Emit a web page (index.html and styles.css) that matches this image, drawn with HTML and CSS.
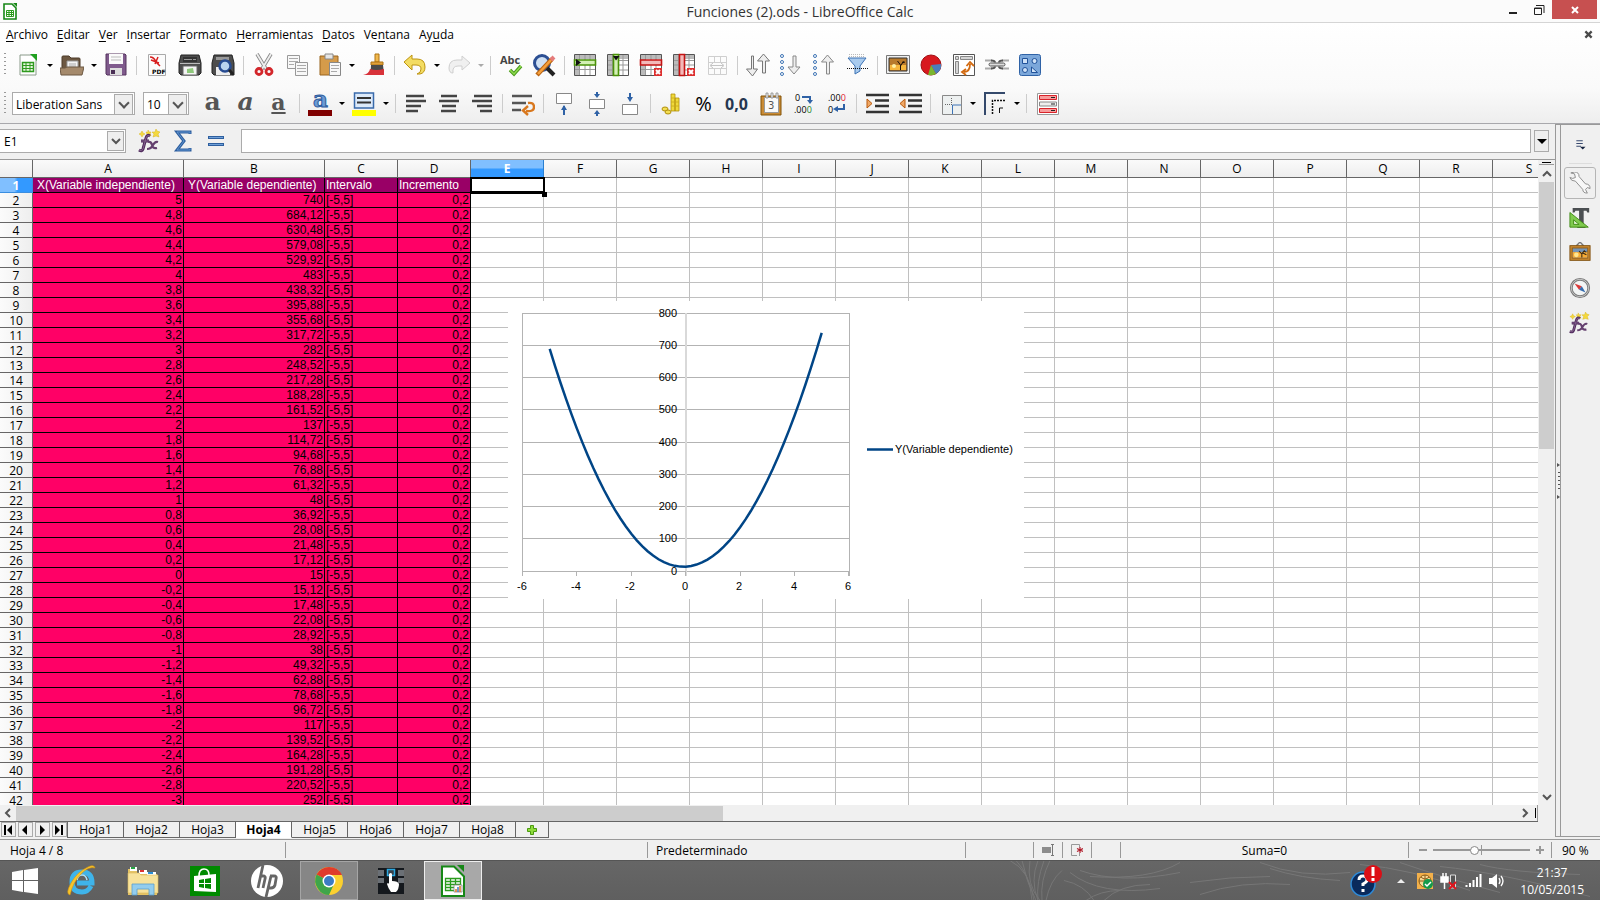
FILE: index.html
```
<!DOCTYPE html>
<html lang="es">
<head>
  <meta charset="UTF-8" />
  <meta name="viewport" content="width=device-width, initial-scale=1.0" />
  <title>Funciones (2).ods - LibreOffice Calc</title>
  <link rel="stylesheet" href="styles.css">
</head>
<body>
  <!-- Shared icons -->
  <svg class="defs" aria-hidden="true">
    <symbol id="fx" viewBox="0 0 24 24">
      <path d="M3 4l1-2 1 2 2 1-2 1-1 2-1-2-2-1zM10 1l1 2h2l-1 2 1 2-2-1-2 1v-2L8 3h2zM18 0l1 2 3 1-2 2 1 3-3-1-3 1 1-3-2-2h3z" fill="#f4d93e" stroke="#d9b51e" stroke-width=".5"/>
      <path d="M12 7q-3-2-4 2L5 20q-1 3-4 1M3 12h8" fill="none" stroke="#4f2a5c" stroke-width="3"/>
      <path d="M12 7q-3-2-4 2L5 20q-1 3-4 1M3 12h8" fill="none" stroke="#85628f" stroke-width="1"/>
      <path d="M10 13q3-1 4 3t5 3M20 13q-3-1-5 3t-6 4" fill="none" stroke="#65406f" stroke-width="2.2"/>
    </symbol>
    <symbol id="picture" viewBox="0 0 24 24">
      <rect x="1" y="4" width="22" height="16" fill="#c98a32" stroke="#7e4d0b"/>
      <rect x="3.5" y="6.500" width="17" height="11" fill="#7595b8" stroke="#8b5713"/>
      <path d="M4 11h16v6H4z" fill="#f8ac35"/><circle cx="8" cy="14" r="2.500" fill="#ffe68f"/>
      <path d="M14 17v-4l-3-3M14 13l3-4M16 10l3 1M15 12l4 2" stroke="#3b2a14" fill="none" stroke-width="1.200"/>
    </symbol>
  </svg>

  <header class="titlebar">
    <svg class="app-icon" viewBox="0 0 14 17"><path d="M1 1h8l4 4v11H1z" fill="#fff" stroke="#178717" stroke-width="1.600"/><path d="M10 0h4v4z" fill="#178717"/><path d="M3.500 7.500h7v6h-7zM3 9.500h8M3 11.500h8M6 7v7M8.500 7v7" fill="none" stroke="#2a9c1c"/></svg>
    <h1>Funciones (2).ods - LibreOffice Calc</h1>
    <div class="window-buttons">
      <button aria-label="Minimizar"><svg viewBox="0 0 12 12"><path d="M2 9h8" stroke="#222" stroke-width="2"/></svg></button>
      <button aria-label="Restaurar"><svg viewBox="0 0 12 12"><path d="M1.500 4h7v6.500h-7zM3 1.500h8V9M1 4.500h8" fill="none" stroke="#222"/></svg></button>
      <button class="close" aria-label="Cerrar"><svg viewBox="0 0 12 12"><path d="M3 3l6 6M9 3l-6 6" stroke="#fff" stroke-width="2"/></svg></button>
    </div>
  </header>

  <div class="bars">
    <nav class="menu">
      <button><u>A</u>rchivo</button>
      <button><u>E</u>ditar</button>
      <button><u>V</u>er</button>
      <button><u>I</u>nsertar</button>
      <button><u>F</u>ormato</button>
      <button><u>H</u>erramientas</button>
      <button><u>D</u>atos</button>
      <button>Ve<u>n</u>tana</button>
      <button>Ay<u>u</u>da</button>
      <button class="close-doc" aria-label="Cerrar documento"><svg viewBox="0 0 10 10"><path d="M1.500 1.500l7 7M8.500 1.500l-7 7" stroke="#4a4a4a" stroke-width="2.500"/></svg></button>
    </nav>

    <div class="toolbar" id="standard-bar">
      <span class="grip"></span>
      <button class="tool" aria-label="Nuevo"><svg viewBox="0 0 24 24"><path d="M4 2h12l4 4v16H4z" fill="#fff" stroke="#8a9a8a"/><path d="M14 1h7v7z" fill="#20a020"/><path d="M6.500 9.500h11v9h-11z" fill="#e6f6dc" stroke="#2f9a1f" stroke-width="1.500"/><path d="M6 12.500h12M6 15.500h12M10 9v10M14 9v10" stroke="#2f9a1f"/></svg></button>
      <button class="drop" aria-label="Más"></button>
      <button class="tool" aria-label="Abrir"><svg viewBox="0 0 24 24"><path d="M2 19V4q0-1 1-1h6l2 2h8q1 0 1 1v13z" fill="#6d5842" stroke="#4d3b29"/><path d="M7 8h11v9H7z" fill="#f4f4f4" stroke="#999"/><path d="M9 11h7M9 13h7" stroke="#aaa"/><path d="M0 15h5l2-1h17l-2 8H1z" fill="#a58a6c" stroke="#6d5842"/></svg></button>
      <button class="drop" aria-label="Más"></button>
      <button class="tool" aria-label="Guardar"><svg viewBox="0 0 24 24"><path d="M2 1h19l1 1v20H3l-1-1z" fill="#7f5a8c" stroke="#56345f"/><path d="M5 1h14v10H5z" fill="#fafafa"/><path d="M7 4h10M7 7h10" stroke="#bbb"/><path d="M6 15h12v7H6z" fill="#ddd"/><path d="M7 17h4v4H7z" fill="#4a2f55"/></svg></button>
      <span class="sep"></span>
      <button class="tool" aria-label="Exportar a PDF"><svg viewBox="0 0 24 24"><path d="M3.500 1.500h17v21h-17z" fill="#fbfbfb" stroke="#aaa"/><path d="M5 4q4 0 6 5l4 4M13 4l-3 7M6 7l8 3" stroke="#d81e1e" stroke-width="1.500" fill="none"/><text x="7" y="21" class="ico-pdf">PDF</text></svg></button>
      <button class="tool" aria-label="Imprimir"><svg viewBox="0 0 24 24"><path d="M3 2h18l2 8v10l-2 2H3l-2-2V10z" fill="#4d4d4d" stroke="#222"/><path d="M5 4h14v5H5z" fill="#333"/><path d="M6 6.500h8M15 6.500h3" stroke="#999"/><path d="M2 10.500h20" stroke="#bbb"/><path d="M5 13h14v9H5z" fill="#f4f4f4" stroke="#666"/><path d="M9 16l6-1 1 5H9z" fill="#8fc97c"/></svg></button>
      <button class="tool" aria-label="Vista previa"><svg viewBox="0 0 24 24"><path d="M3 2h18l2 8v10l-2 2H3l-2-2V10z" fill="#4d4d4d" stroke="#222"/><path d="M5 4h13v3H5z" fill="#999"/><path d="M5 14h14v8H5z" fill="#eee"/><circle cx="14" cy="13" r="5.500" fill="#b9d3ee" stroke="#274b91" stroke-width="2.500"/><path d="M18 17l5 5" stroke="#222" stroke-width="3"/></svg></button>
      <span class="sep"></span>
      <button class="tool" aria-label="Cortar"><svg viewBox="0 0 24 24"><path d="M5 1l9 15M19 1l-9 15" stroke="#888" stroke-width="3.500"/><path d="M5 1l9 15M19 1l-9 15" stroke="#eee" stroke-width="1.800"/><circle cx="7" cy="18.500" r="3" fill="none" stroke="#d3262b" stroke-width="2.800"/><circle cx="17" cy="18.500" r="3" fill="none" stroke="#d3262b" stroke-width="2.800"/></svg></button>
      <button class="tool" aria-label="Copiar"><svg viewBox="0 0 24 24"><path d="M2.500 2.500h12v13h-12z" fill="#f8f8f8" stroke="#999"/><path d="M4 5.500h9M4 8.500h9M4 11.500h5" stroke="#aaa"/><path d="M10.500 9.500h12v13h-12z" fill="#f8f8f8" stroke="#999"/><path d="M12 12.500h9M12 15.500h9M12 18.500h9" stroke="#aaa"/></svg></button>
      <button class="tool" aria-label="Pegar"><svg viewBox="0 0 24 24"><path d="M2 3h18v19H2z" fill="#d59b4a" stroke="#99651e"/><path d="M7 1h8v5H7z" fill="#e6e6e6" stroke="#888"/><path d="M11.500 9.500h11v13h-11z" fill="#f8f8f8" stroke="#888"/><path d="M13 12.500h8M13 15.500h8M13 18.500h6" stroke="#aaa"/></svg></button>
      <button class="drop" aria-label="Más"></button>
      <button class="tool" aria-label="Clonar formato"><svg viewBox="0 0 24 24"><path d="M13 1h4v8h-4z" fill="#f0b84d" stroke="#ad7312"/><path d="M9 9h12v3H9z" fill="#e0a13b" stroke="#ad7312"/><path d="M9 12h12l1 9H7q2-3 2-9z" fill="#4a4a4a"/><path d="M8 16q6 2 14 0v6H1q6-1 7-6z" fill="#d8323a"/></svg></button>
      <span class="sep"></span>
      <button class="tool" aria-label="Deshacer"><svg viewBox="0 0 24 24"><path d="M1 9l8-7v4h5q8 0 8 8 0 6-5 7h-3q4-1 4-5t-5-4H9v5z" fill="#f3dc62" stroke="#bd9410"/></svg></button>
      <button class="drop" aria-label="Más"></button>
      <button class="tool" aria-label="Rehacer"><svg viewBox="0 0 24 24"><path d="M23 10l-8-7v4h-5q-8 0-8 8 0 5 4 5-1-7 5-7h4v4z" fill="#f0f0f0" stroke="#cfcfcf"/></svg></button>
      <button class="drop off" aria-label="Más"></button>
      <span class="sep"></span>
      <button class="tool" aria-label="Ortografía"><svg viewBox="0 0 24 24"><text x="1" y="11" class="ico-abc">Abc</text><path d="M11 17l4 4 7-8" fill="none" stroke="#4c9a1e" stroke-width="3.500"/><path d="M11 17l4 4 7-8" fill="none" stroke="#8fdc4e" stroke-width="1.500"/></svg></button>
      <button class="tool" aria-label="Buscar y reemplazar"><svg viewBox="0 0 24 24"><circle cx="10" cy="10" r="7.500" fill="#cfe0f3" stroke="#2c4f93" stroke-width="3"/><path d="M15 15l7 7" stroke="#222" stroke-width="4"/><path d="M5 22L20 6" stroke="#b96412" stroke-width="4.500"/><path d="M6 21L19 7" stroke="#f6a03c" stroke-width="2.500"/><path d="M19 7l3-3" stroke="#e57b7b" stroke-width="4"/></svg></button>
      <span class="sep"></span>
      <button class="tool" aria-label="Insertar fila"><svg viewBox="0 0 24 24"><path d="M1.500 1.500h21v21h-21z" fill="#fff" stroke="#555"/><path d="M2 2h20v4H2zM2 2h4v20H2z" fill="#bbb"/><path d="M6.500 2v20M12 2v20M17 2v20M2 16.500h20" stroke="#999"/><path d="M1.500 7h21v5h-21z" fill="#d3f0b4" stroke="#4a9208" stroke-width="1.600"/><path d="M3 6l5 3.500L3 13z" fill="#111"/></svg></button>
      <button class="tool" aria-label="Insertar columna"><svg viewBox="0 0 24 24"><path d="M1.500 1.500h21v21h-21z" fill="#fff" stroke="#555"/><path d="M2 2h20v4H2zM2 2h4v20H2z" fill="#bbb"/><path d="M2 7.500h20M2 12h20M2 17h20M6.500 2v20M17 2v20" stroke="#999"/><path d="M7.500 1.500h5v21h-5z" fill="#d3f0b4" stroke="#4a9208" stroke-width="1.600"/><path d="M7 3h6.500L10 7.500z" fill="#111"/></svg></button>
      <button class="tool" aria-label="Eliminar fila"><svg viewBox="0 0 24 24"><path d="M1.500 1.500h21v21h-21z" fill="#fff" stroke="#555"/><path d="M2 2h20v4H2zM2 2h4v20H2z" fill="#bbb"/><path d="M6.500 2v20M12 2v20M17 2v20M2 16.500h20" stroke="#999"/><path d="M1.500 7h21v5h-21z" fill="#f3b9b9" stroke="#c41414" stroke-width="1.600"/><path d="M15 15h8v8h-8z" fill="#dc2f2f"/><path d="M17 17l4 4M21 17l-4 4" stroke="#fff" stroke-width="2"/></svg></button>
      <button class="tool" aria-label="Eliminar columna"><svg viewBox="0 0 24 24"><path d="M1.500 1.500h21v21h-21z" fill="#fff" stroke="#555"/><path d="M2 2h20v4H2zM2 2h4v20H2z" fill="#bbb"/><path d="M2 7.500h20M2 12h20M2 17h20M6.500 2v20M17 2v20" stroke="#999"/><path d="M7.500 1.500h5v21h-5z" fill="#f3b9b9" stroke="#c41414" stroke-width="1.600"/><path d="M15 15h8v8h-8z" fill="#dc2f2f"/><path d="M17 17l4 4M21 17l-4 4" stroke="#fff" stroke-width="2"/></svg></button>
      <button class="tool" aria-label="Combinar celdas"><svg viewBox="0 0 24 24"><path d="M3.500 3.500h18v18h-18zM3 9.500h18M3 15.500h18M9.500 3v6M15.500 3v6M9.500 16v6M15.500 16v6" fill="none" stroke="#cfcfcf"/><path d="M6 12.500h12M8 10l-3 2.500L8 15M16 10l3 2.500-3 2.500" fill="none" stroke="#c4c4c4"/></svg></button>
      <span class="sep"></span>
      <button class="tool" aria-label="Ordenar"><svg viewBox="0 0 24 24"><path d="M5.500 3h2v13h4l-5 7-6-7h5z" fill="#eee" stroke="#777"/><path d="M17.500 1l6 7h-4v12h-3V8h-5z" fill="#eee" stroke="#777"/></svg></button>
      <button class="tool" aria-label="Orden ascendente"><svg viewBox="0 0 24 24"><g fill="#fff" stroke="#3e74b5"><circle cx="3" cy="3" r="1.500"/><circle cx="3" cy="9" r="1.500"/><circle cx="3" cy="15" r="1.500"/><circle cx="3" cy="21" r="1.500"/></g><path d="M14 3h3v11h4l-6 7-6-7h5z" fill="#eee" stroke="#888"/></svg></button>
      <button class="tool" aria-label="Orden descendente"><svg viewBox="0 0 24 24"><g fill="#fff" stroke="#3e74b5"><circle cx="3" cy="3" r="1.500"/><circle cx="3" cy="9" r="1.500"/><circle cx="3" cy="15" r="1.500"/><circle cx="3" cy="21" r="1.500"/></g><path d="M15.500 2l6 7h-4v12h-3V9h-5z" fill="#eee" stroke="#888"/></svg></button>
      <button class="tool" aria-label="Filtro automático"><svg viewBox="0 0 24 24"><path d="M4 1.500h16M4 3.500h16" stroke="#bbb" stroke-dasharray="1 1"/><path d="M3 5h18l-6 8v5l-5 3v-8z" fill="#a9cbee" stroke="#3c72b4"/><path d="M2 15.500h21" stroke="#111" stroke-dasharray="1 1"/></svg></button>
      <span class="sep"></span>
      <button class="tool" aria-label="Imagen"><svg viewBox="0 0 24 24"><path d="M.5 2.500h23v18H.5z" fill="#eee" stroke="#777"/><path d="M3 5h18v13H3z" fill="#b97a2c" stroke="#333"/><path d="M4 12h16v5H4z" fill="#f7b63d"/><circle cx="8" cy="13" r="2" fill="#fff0a6"/><path d="M14.500 17v-5l-3-4M14.500 13l3-5M16 10l3-1" fill="none" stroke="#20140a"/></svg></button>
      <button class="tool" aria-label="Gráfico"><svg viewBox="0 0 24 24"><circle cx="12" cy="12" r="10" fill="#d8191f" stroke="#a10f13"/><path d="M12 12l10-1q1 6-5 10z" fill="#4d7dbb"/><path d="M12 12l5 9q-4 2-8 1z" fill="#79b62f"/></svg></button>
      <button class="tool" aria-label="Tabla dinámica"><svg viewBox="0 0 24 24"><path d="M1.500 1.500h21v21h-21z" fill="#fff" stroke="#555"/><path d="M3.500 3.500h3v3h-3zM8.500 3.500h12v3h-12zM3.500 8.500h3v12h-3z" fill="#d5d5d5" stroke="#888"/><path d="M12 19q6 0 6-8M14.500 13L18 9l4 4M14 16l-4 3 4 3" fill="none" stroke="#d26a10" stroke-width="1.800"/></svg></button>
      <button class="tool" aria-label="Hiperenlace"><svg viewBox="0 0 24 24"><path d="M0 7.500h7M0 15.500h7M17 7.500h7M17 15.500h7" stroke="#aaa" stroke-width="2"/><path d="M6 7.500q4 0 4 2M6 15.500q4 0 4-2M18 7.500q-4 0-4 2M18 15.500q-4 0-4-2" fill="none" stroke="#555" stroke-width="2"/><rect x="4" y="10" width="16" height="3" rx="1.500" fill="#ddd" stroke="#555"/></svg></button>
      <button class="tool" aria-label="Funciones de dibujo"><svg viewBox="0 0 24 24"><rect x="1.500" y="1.500" width="21" height="21" rx="2" fill="#7ba7da" stroke="#2f62a6"/><path d="M4.500 5.500h5v5h-5zM13.500 14v5.500h6z" fill="#cfe2f7" stroke="#20529a"/><circle cx="16.500" cy="8" r="2.500" fill="#cfe2f7" stroke="#20529a"/><circle cx="7" cy="17" r="2.500" fill="#cfe2f7" stroke="#20529a"/></svg></button>
    </div>

    <div class="toolbar" id="format-bar">
      <span class="grip"></span>
      <label class="combo font-name"><select aria-label="Nombre de la fuente"><option>Liberation Sans</option></select></label>
      <label class="combo font-size"><select aria-label="Tamaño de la fuente"><option>10</option></select></label>
      <button class="tool letter" aria-label="Negrita"><b>a</b></button>
      <button class="tool letter" aria-label="Cursiva"><i>a</i></button>
      <button class="tool letter" aria-label="Subrayado"><u>a</u></button>
      <span class="sep"></span>
      <button class="tool" aria-label="Color de fuente"><svg viewBox="0 0 24 24"><text x="5" y="15" class="ico-a">a</text><path d="M0 18h24v6H0z" fill="#800000"/></svg></button>
      <button class="drop" aria-label="Más"></button>
      <button class="tool" aria-label="Color de fondo"><svg viewBox="0 0 24 24"><path d="M2.500 1h19v15h-19z" fill="#dceafa" stroke="#386aab" stroke-width="1.500"/><path d="M5 6h14M5 10.500h14" stroke="#333" stroke-width="2"/><path d="M0 18h24v6H0z" fill="#ff0"/></svg></button>
      <button class="drop" aria-label="Más"></button>
      <span class="sep"></span>
      <button class="tool" aria-label="Izquierda"><svg viewBox="0 0 24 24"><path d="M2 4h18M2 9h20M2 14h15M2 19h12" stroke="#444" stroke-width="2.500"/></svg></button>
      <button class="tool" aria-label="Centrar"><svg viewBox="0 0 24 24"><path d="M4 4h16M2 9h20M5 14h14M4 19h15" stroke="#444" stroke-width="2.500"/></svg></button>
      <button class="tool" aria-label="Derecha"><svg viewBox="0 0 24 24"><path d="M4 4h18M2 9h20M7 14h15M10 19h12" stroke="#444" stroke-width="2.500"/></svg></button>
      <span class="sep"></span>
      <button class="tool" aria-label="Ajustar texto"><svg viewBox="0 0 24 24"><path d="M1 4h20M1 11h14M1 18h9" stroke="#555" stroke-width="2.500"/><path d="M17 11q6-1 6 4t-8 4M17 14l-5 4.500 5 4.500" fill="none" stroke="#d8771d" stroke-width="2.400"/></svg></button>
      <span class="sep"></span>
      <button class="tool" aria-label="Alinear arriba"><svg viewBox="0 0 24 24"><path d="M4.500 1.500h15v10h-15z" fill="#fff" stroke="#888"/><path d="M12 14v9" stroke="#2f62a6" stroke-width="2"/><path d="M9 18l3-5 3 5z" fill="#2f62a6"/></svg></button>
      <button class="tool" aria-label="Centrar verticalmente"><svg viewBox="0 0 24 24"><path d="M4.500 7.500h15v9h-15z" fill="#fff" stroke="#888"/><path d="M12 0v3M12 21v3" stroke="#2f62a6" stroke-width="2"/><path d="M9 2l3 4 3-4zM9 22l3-4 3 4z" fill="#2f62a6"/></svg></button>
      <button class="tool" aria-label="Alinear abajo"><svg viewBox="0 0 24 24"><path d="M4.500 12.500h15v10h-15z" fill="#fff" stroke="#888"/><path d="M12 1v6" stroke="#2f62a6" stroke-width="2"/><path d="M9 5l3 5 3-5z" fill="#2f62a6"/></svg></button>
      <span class="sep"></span>
      <button class="tool" aria-label="Moneda"><svg viewBox="0 0 24 24"><path d="M12 2h4v17h-4zM16 6h4v13h-4z" fill="#efd93a" stroke="#b18f0b" stroke-width=".8"/><path d="M12 6h4M12 10h4M12 14h4M16 10h4M16 14h4" stroke="#c9a820" stroke-width=".8"/><ellipse cx="6" cy="17" rx="3" ry="2" fill="#f3de54" stroke="#b18f0b"/><ellipse cx="9" cy="20" rx="3" ry="2" fill="#f3de54" stroke="#b18f0b"/></svg></button>
      <button class="tool percent" aria-label="Porcentaje">%</button>
      <button class="tool number" aria-label="Número">0,0</button>
      <button class="tool" aria-label="Fecha"><svg viewBox="0 0 24 24"><path d="M3 4h20v19H3z" fill="#c98b35" stroke="#835207"/><path d="M6.500 5.500h14v15h-14z" fill="#fafafa" stroke="#999"/><path d="M8 1h2v5H8zM13 1h2v5h-2zM18 1h2v5h-2z" fill="#eee" stroke="#888" stroke-width=".8"/><text x="10" y="17" class="ico-day">3</text></svg></button>
      <button class="tool" aria-label="Añadir decimal"><svg viewBox="0 0 24 24"><text x="4" y="9" class="ico-dec">0</text><text x="3" y="21" class="ico-dec">.00<tspan fill="#19832b">0</tspan></text><path d="M11 5h8v4" fill="none" stroke="#2f62a6" stroke-width="2"/><path d="M16 8h6l-3 4z" fill="#2f62a6"/></svg></button>
      <button class="tool" aria-label="Eliminar decimal"><svg viewBox="0 0 24 24"><text x="4" y="9" class="ico-dec">.00<tspan fill="#e01b2f">0</tspan></text><text x="4" y="21" class="ico-dec">0</text><path d="M20 12v5h-7" fill="none" stroke="#2f62a6" stroke-width="2"/><path d="M14 14v6l-5-3z" fill="#2f62a6"/></svg></button>
      <span class="sep"></span>
      <button class="tool" aria-label="Aumentar sangría"><svg viewBox="0 0 24 24"><path d="M1 3h23M10 8.500h14M10 14h14M1 20h23" stroke="#333" stroke-width="2.500"/><path d="M2 7l5 4.500L2 16z" fill="#f0a866" stroke="#b8590c"/></svg></button>
      <button class="tool" aria-label="Reducir sangría"><svg viewBox="0 0 24 24"><path d="M1 3h23M10 8.500h14M10 14h14M1 20h23" stroke="#333" stroke-width="2.500"/><path d="M7 7l-5 4.500L7 16z" fill="#f0a866" stroke="#b8590c"/></svg></button>
      <span class="sep"></span>
      <button class="tool" aria-label="Bordes"><svg viewBox="0 0 24 24"><path d="M3.500 3.500h19v19h-19z" fill="#edf0f0" stroke="#888"/><path d="M12.500 6v7M6 12.500h6" stroke="#666" stroke-dasharray="1 1"/><path d="M13.500 22v-9H22" fill="none" stroke="#3c72b4"/></svg></button>
      <button class="drop" aria-label="Más"></button>
      <button class="tool" aria-label="Estilo de borde"><svg viewBox="0 0 24 24"><path d="M2 23V1h20" fill="none" stroke="#34496b" stroke-width="2"/><path d="M9.500 22V8.500H22" fill="none" stroke="#111" stroke-width="1.500" stroke-dasharray="2 1"/><path d="M16.500 21v-5H20" fill="none" stroke="#111"/></svg></button>
      <button class="drop" aria-label="Más"></button>
      <span class="sep"></span>
      <button class="tool" aria-label="Formato condicional"><svg viewBox="0 0 24 24"><path d="M2.500 1.500h21v21h-21z" fill="#fff" stroke="#999"/><path d="M4.500 3.500h17v4h-17zM4.500 16.500h17v4h-17z" fill="#f79c9c" stroke="#d8232a"/><path d="M4.500 10h17v4h-17z" fill="#eee" stroke="#888"/><path d="M16 5.500h4M16 12h4M16 18.500h4" stroke="#222"/></svg></button>
    </div>
  </div>

  <main class="workspace">
    <section class="document">
      <div class="formula-bar">
        <div class="name-box">
          <input type="text" value="E1" aria-label="Cuadro de nombre">
          <button aria-label="Abrir lista"><svg viewBox="0 0 10 10"><path d="M1 3l4 4 4-4" fill="none" stroke="#555" stroke-width="2"/></svg></button>
        </div>
        <button class="tool" aria-label="Asistente de funciones"><svg viewBox="0 0 24 24"><use href="#fx"/></svg></button>
        <button class="tool" aria-label="Suma"><svg viewBox="0 0 24 24"><path d="M19 5V3H6l7 9-7 9h13v-2" fill="none" stroke="#2e5f9f" stroke-width="3"/><path d="M19 4.500V3H6l7 9-7 9h13v-1.500" fill="none" stroke="#5f93cf" stroke-width="1"/></svg></button>
        <button class="tool" aria-label="Función"><svg viewBox="0 0 24 24"><path d="M4 8.500h16M4 15.500h16" stroke="#2e5f9f" stroke-width="3"/><path d="M5 8.500h14M5 15.500h14" stroke="#6fa0d8"/></svg></button>
        <input class="formula" type="text" aria-label="Línea de entrada">
        <button class="expand" aria-label="Expandir"><svg viewBox="0 0 10 10"><path d="M0 3h10L5 8z" fill="#000"/></svg></button>
      </div>

      <div class="sheet-row">
        <div class="sheet">
          <table class="grid">
            <colgroup id="cols"></colgroup>
            <thead><tr id="letters"></tr></thead>
            <tbody id="cells"></tbody>
          </table>
          <svg class="chart" viewBox="0 0 516 298" role="img" aria-label="Y(Variable dependiente)">
            <g id="chart-grid"></g>
            <polyline id="curve"></polyline>
            <path class="series" d="M359 148.500h26"/>
            <text x="387" y="152">Y(Variable dependiente)</text>
          </svg>
        </div>
        <div class="vscroll">
          <span class="split"></span>
          <button aria-label="Subir"><svg viewBox="0 0 10 10"><path d="M1 7l4-4 4 4" fill="none" stroke="#555" stroke-width="2"/></svg></button>
          <span class="thumb"></span>
          <button aria-label="Bajar"><svg viewBox="0 0 10 10"><path d="M1 3l4 4 4-4" fill="none" stroke="#555" stroke-width="2"/></svg></button>
        </div>
      </div>

      <div class="hscroll">
        <button aria-label="Izquierda"><svg viewBox="0 0 10 10"><path d="M7 1L3 5l4 4" fill="none" stroke="#555" stroke-width="2"/></svg></button>
        <span class="thumb"></span>
        <button aria-label="Derecha"><svg viewBox="0 0 10 10"><path d="M3 1l4 4-4 4" fill="none" stroke="#555" stroke-width="2"/></svg></button>
        <span class="split"></span>
      </div>

      <div class="tabs">
        <button class="step" aria-label="Primera hoja"><svg viewBox="0 0 12 12"><path d="M2 1h2v10H2zM10 1v10L5 6z"/></svg></button>
        <button class="step" aria-label="Hoja anterior"><svg viewBox="0 0 12 12"><path d="M8 1v10L3 6z"/></svg></button>
        <button class="step" aria-label="Hoja siguiente"><svg viewBox="0 0 12 12"><path d="M4 1v10l5-5z"/></svg></button>
        <button class="step" aria-label="Última hoja"><svg viewBox="0 0 12 12"><path d="M2 1v10l5-5zM8 1h2v10H8z"/></svg></button>
        <div class="tab-list">
          <button class="tab">Hoja1</button>
          <button class="tab">Hoja2</button>
          <button class="tab">Hoja3</button>
          <button class="tab active">Hoja4</button>
          <button class="tab">Hoja5</button>
          <button class="tab">Hoja6</button>
          <button class="tab">Hoja7</button>
          <button class="tab">Hoja8</button>
          <button class="tab add" aria-label="Añadir hoja"><svg viewBox="0 0 12 12"><path d="M4.500 1.500h3v3h3v3h-3v3h-3v-3h-3v-3h3z" fill="#8fdc3c" stroke="#4a9a10"/></svg></button>
        </div>
      </div>
    </section>

    <div class="splitter"><svg viewBox="0 0 4 36"><path d="M0 0l3 2-3 2zM0 32l3 2-3 2z" fill="#555"/><path d="M2 9v20" stroke="#555" stroke-width="2" stroke-dasharray="1 3"/></svg></div>

    <aside class="sidebar">
      <button aria-label="Configuración"><svg viewBox="0 0 24 24"><path d="M8 8.500h7M8 11.500h7M8 14.500h5" stroke="#3a4b70" stroke-width="1.200"/><path d="M12 15h6l-3 3z" fill="#14223f"/></svg></button>
      <hr>
      <button class="current" aria-label="Propiedades"><svg viewBox="0 0 24 24"><path d="M2 1l4 1 1 4-3 1-3-1q1 4 6 4l8 9q0 4 5 4l-2-4 2-2 3 1q0-5-5-5L11 5q0-5-5-5z" fill="#f8f8f8" stroke="#888"/></svg></button>
      <button aria-label="Estilos"><svg viewBox="0 0 24 24"><path d="M4 1h18v5h-2l-1-2h-3v17h2v2H9v-2h2V4H7L6 6H4z" fill="#4b4f52"/><path d="M1 6l20 16H1z" fill="#7fca4d" stroke="#3f8b14"/><path d="M5 14l6 5H5z" fill="#dff3cf" stroke="#3f8b14"/></svg></button>
      <button aria-label="Galería"><svg viewBox="0 0 24 24"><path d="M8 4l4-4 4 4" fill="none" stroke="#777" stroke-width="1.500"/><use href="#picture"/></svg></button>
      <button aria-label="Navegador"><svg viewBox="0 0 24 24"><circle cx="12" cy="12" r="9.500" fill="#f3f5f5" stroke="#777" stroke-width="3"/><circle cx="12" cy="12" r="9.500" fill="none" stroke="#ccc"/><path d="M6 7l8 3-3 4z" fill="#dc3a3a"/><path d="M18 17l-4-7-3 4z" fill="#376cae"/></svg></button>
      <button aria-label="Funciones"><svg viewBox="0 0 24 24"><use href="#fx"/></svg></button>
    </aside>
  </main>

  <footer class="status">
    <span class="st-sheet">Hoja 4 / 8</span>
    <span class="st-info"></span>
    <span class="st-style">Predeterminado</span>
    <span class="st-icon wide"></span>
    <span class="st-icon"><svg viewBox="0 0 12 12"><path d="M0 3h9v6H0z" fill="#8c8c8c"/><path d="M9 .5h3M9 11.500h3M10.500 1v10" stroke="#777"/></svg></span>
    <span class="st-icon"><svg viewBox="0 0 12 12"><path d="M6 11.500H.5V.5h8v3M8.500 9v3" fill="none" stroke="#999"/><path d="M9 3v6M6 4.500l6 3M12 4.500l-6 3" stroke="#b21c2b" stroke-width="1.200"/></svg></span>
    <span class="st-icon"></span>
    <span class="st-sum">Suma=0</span>
    <span class="st-zoom">
      <svg viewBox="0 0 8 8"><path d="M0 4h8" stroke="#999" stroke-width="2"/></svg>
      <input type="range" min="0" max="100" value="42" aria-label="Escala">
      <svg viewBox="0 0 8 8"><path d="M0 4h8M4 0v8" stroke="#999" stroke-width="2"/></svg>
    </span>
    <span class="st-percent">90 %</span>
  </footer>

  <div class="taskbar">
    <svg class="feathers" viewBox="0 0 640 40" preserveAspectRatio="xMaxYMid slice" fill="none" stroke="#8a8a8a">
      <path d="M50 0q20 10 24 40M56 0q14 14 16 40M62 0q4 20 14 40M70 0q-4 24 10 40M78 0q-8 20 0 40M84 0q-8 22-6 40M90 0q-10 20-8 40M102 10q-12 10-16 30M104 20q20 4 30 20M110 12q30 24 90 16M120 10q40 14 100 2M130 16q60 4 90-14M160 30q-20 0-34 10M190 24q-30 0-46 16M230 22q40-6 80-6M240 34q40-14 90-10M300 2q40 16 90 10M310 8q30 10 70 12M400 4q50 4 110 26M440 2q40 14 100 30M480 6q60 6 150 30M520 4q30 8 100 10"/>
    </svg>
    <button class="start" aria-label="Inicio"><svg viewBox="0 0 26 26"><path d="M0 4l11-2v10H0zM12 2l14-2v12H12zM0 13h11v11L0 22zM12 13h14v13l-14-2z" fill="#fff"/></svg></button>
    <button class="app" aria-label="Internet Explorer"><svg viewBox="0 0 32 32"><path d="M26 21q-3 6-9 6-10 0-10-10T17 7q10 0 10 11H12" fill="none" stroke="#3fb4ea" stroke-width="5"/><path d="M12 15q1-5 5-5t5 5" fill="none" stroke="#a9e3fb" stroke-width="1.500"/><path d="M5 30Q0 29 6 18T23 2q6-3 7 1-6-2-14 6T5 30z" fill="#f7c52c" stroke="#d9960b" stroke-width=".6"/></svg></button>
    <button class="app" aria-label="Explorador de archivos"><svg viewBox="0 0 32 32"><path d="M1 4h9v5h20v21H1z" fill="#e5c465"/><path d="M3 2h7v4H3zM12 5h8v4h-8zM20 7h9v4h-9z" fill="#fff"/><path d="M4 2h4v2H4z" fill="#25a543"/><path d="M13 5h4v2h-4z" fill="#d33"/><path d="M21 7h5v2h-5z" fill="#2b8fd6"/><path d="M1 8h11l2 2h17v18H1z" fill="#f7e29b" stroke="#dab95a" stroke-width=".6"/><path d="M5 30V19h22v11h-5v-6H10v6z" fill="#93cdee" stroke="#5aa0cc" stroke-width=".8"/></svg></button>
    <button class="app" aria-label="Tienda"><svg viewBox="0 0 32 32"><path d="M1 1h30v30H1z" fill="#008a00"/><path d="M5 11l22-2v18L5 26z" fill="#fff"/><path d="M10 11q0-7 5-7t5 6" fill="none" stroke="#fff" stroke-width="1.600"/><path d="M10 15l5-1v4h-5zM16 14l6-1v5h-6zM10 19h5v4l-5-1zM16 19h6v5l-6-1z" fill="#008a00"/></svg></button>
    <button class="app" aria-label="HP"><svg viewBox="0 0 32 32"><circle cx="16" cy="16" r="16" fill="#fff"/><path d="M12 0L7 23M9 11h3q3 0 2 3l-2 9M20 11l-5 21M19 11h4q3 0 2 3l-1 6q-1 3-4 3h-2" fill="none" stroke="#666" stroke-width="2.800"/></svg></button>
    <button class="app open" aria-label="Google Chrome"><svg viewBox="0 0 32 32"><circle cx="16" cy="16" r="14" fill="#fbd02f"/><path d="M16 16L3.500 9.500Q8 2 16 2q9 0 13 8H16z" fill="#df3b2c"/><path d="M3.500 9.500Q0 17 5 24q4 6 11 6l5-11-5-3z" fill="#3fa54a"/><circle cx="16" cy="16" r="6.500" fill="#fff"/><circle cx="16" cy="16" r="5" fill="#3c7cc4"/></svg></button>
    <button class="app" aria-label="Teclado táctil"><svg viewBox="0 0 32 32"><path d="M3 3h26v26H3z" fill="#14181d"/><path d="M3 5h6v6H3zM3 13h6v5H3zM23 5h6v6h-6zM23 13h6v5h-6z" fill="#6b7076"/><path d="M12.500 4.500h7v6h-7z" fill="#39414a" stroke="#2ba7e0" stroke-width="1.500"/><path d="M14 9q2-2 3 0v7q6 0 7 3 0 5-3 8h-5q-3-4-4-8 1-2 2 0z" fill="#fff"/></svg></button>
    <button class="app open front" aria-label="LibreOffice Calc"><svg viewBox="0 0 32 32"><path d="M5 1.500h12l10 10V31H5z" fill="#fff" stroke="#178717" stroke-width="2"/><path d="M20 0h7v7z" fill="#178717"/><path d="M8.500 13.500h15v12h-15zM8 16.500h16M8 19.500h16M8 22.500h16M13.500 13v13M18.500 13v13" fill="none" stroke="#2b9c1e" stroke-width="1.300"/><path d="M17 20h8v7h-8z" fill="#fff" stroke="#888" stroke-width=".8"/><path d="M19 24v3M23 21v6" stroke="#e07020" stroke-width="1.500"/><path d="M21 22v5" stroke="#3a78c0" stroke-width="1.500"/></svg></button>

    <div class="tray">
      <svg class="help" viewBox="0 0 32 32"><circle cx="13" cy="19" r="12" fill="#0a2a5c" stroke="#2f8bd8" stroke-width="1.500"/><path d="M9 15q0-4 4-4t4 4q0 2-4 4v2M13 24v3" fill="none" stroke="#fff" stroke-width="3"/><circle cx="23" cy="9" r="9" fill="#dc0e16"/><path d="M23 2v9M23 13v3" stroke="#fff" stroke-width="3"/></svg>
      <svg viewBox="0 0 18 18"><path d="M5 11h8L9 7z" fill="#eee"/></svg>
      <svg viewBox="0 0 18 18"><path d="M1 1h16v16H1z" fill="#f3b04a"/><circle cx="9" cy="9" r="6" fill="#f7d793" stroke="#8a5a14"/><path d="M3 9h12M9 3v12M5 5q4 4 8 0" fill="none" stroke="#8a5a14"/><circle cx="12" cy="12" r="5" fill="#159a4b"/><path d="M9 12l2 2 4-4" fill="none" stroke="#fff" stroke-width="1.500"/></svg>
      <svg viewBox="0 0 18 18"><path d="M3 1v4M6 1v4M1 5h7v5H1zM4.500 10v7" stroke="#fff" stroke-width="1.500" fill="#fff"/><path d="M10.500 3h5v13h-5z" fill="#555" stroke="#ddd"/><path d="M9 10l7 7M16 10l-7 7" stroke="#e0141c" stroke-width="2"/></svg>
      <svg viewBox="0 0 18 18"><path d="M2.500 15v-2M6 15v-4M9.500 15V8M13 15V5M16.500 15V2" stroke="#fff" stroke-width="2"/></svg>
      <svg viewBox="0 0 18 18"><path d="M1 6h3l5-4v14l-5-4H1z" fill="#fff"/><path d="M11 6q2 3 0 6M13 4q4 5 0 10" fill="none" stroke="#fff" stroke-width="1.300"/></svg>
      <time class="clock"><span>21:37</span><span>10/05/2015</span></time>
    </div>
  </div>

  <script>
    const SVG_NS = 'http://www.w3.org/2000/svg';
    const letters = 'ABCDEFGHIJKLMNOPQRS'.split('');
    const headings = ['X(Variable independiente)', 'Y(Variable dependiente)', 'Intervalo', 'Incremento'];
    const lastRow = 42;

    const f = x => 28 * x * x + 5 * x + 15;
    const fmt = n => String(Math.round(n * 100) / 100).replace('.', ',');

    // Column headers
    const cols = document.getElementById('cols');
    const letterRow = document.getElementById('letters');
    cols.innerHTML = '<col class="col-num">' + letters.map(l => `<col class="col-${l}">`).join('');
    letterRow.innerHTML = '<th></th>' + letters.map(l => `<th${l === 'E' ? ' class="sel"' : ''}>${l}</th>`).join('');

    // Rows
    const body = document.getElementById('cells');
    for (let row = 1; row <= lastRow; row++) {
      const tr = document.createElement('tr');
      const x = (25 - (row - 2)) / 5;
      const values = row === 1 ? headings : [fmt(x), fmt(f(x)), '[-5,5]', '0,2'];
      let html = `<th${row === 1 ? ' class="sel"' : ''}>${row}</th>`;
      html += values.map((v, i) => {
        const kind = row === 1 ? 'head' : i === 2 ? 'data text' : 'data';
        return `<td class="${kind}">${v}</td>`;
      }).join('');
      for (let i = 4; i < letters.length; i++) {
        html += row === 1 && i === 4 ? '<td class="cursor"></td>' : '<td></td>';
      }
      tr.innerHTML = html;
      body.appendChild(tr);
    }

    // Chart
    const px = x => 14.5 + (x + 6) * 27.2;
    const py = y => 270.5 - y * 0.3225;
    const chartGrid = document.getElementById('chart-grid');

    function add(tag, attrs, text) {
      const el = document.createElementNS(SVG_NS, tag);
      for (const key in attrs) el.setAttribute(key, attrs[key]);
      if (text !== undefined) el.textContent = text;
      chartGrid.appendChild(el);
    }

    for (let y = 0; y <= 800; y += 100) {
      add('path', { class: 'rule', d: `M14.5 ${Math.round(py(y)) - 0.5}H341` });
      add('text', { class: 'y-label', x: 169, y: Math.round(py(y)) + 3 }, y);
    }
    add('path', { class: 'rule', d: 'M14.5 12V275M341.5 12V275' });
    add('path', { class: 'rule axis', d: 'M178 12V275' });
    for (let x = -6; x <= 6; x += 2) {
      add('path', { class: 'rule', d: `M${Math.floor(px(x)) + 0.5} 270v5` });
      add('text', { class: 'x-label', x: Math.round(px(x)) - 1, y: 289 }, x);
    }

    const points = [];
    for (let i = -25; i <= 25; i++) points.push(px(i / 5) + ',' + py(f(i / 5)));
    document.getElementById('curve').setAttribute('points', points.join(' '));
  </script>
</body>
</html>
```
FILE: styles.css
```
* {
  box-sizing: border-box;
}

body {
  margin: 0;
  height: 100vh;
  display: flex;
  flex-direction: column;
  overflow: hidden;
  background: #f0f0f0;
  color: #000;
  font-family: "Open Sans", "Noto Sans", sans-serif;
  font-size: 12px;
}

button {
  padding: 0;
  border: 0;
  background: none;
  font: inherit;
  color: inherit;
}

svg {
  display: block;
  flex-shrink: 0;
}

.defs {
  position: absolute;
  width: 0;
  height: 0;
}

/* Title bar */
.titlebar {
  display: grid;
  grid-template-columns: 1fr auto 1fr;
  height: 23px;
  flex-shrink: 0;
  background: #fbfbfb;
  border-bottom: 1px solid #d5d5d5;
}

.app-icon {
  width: 14px;
  height: 17px;
  margin: 3px 0 0 3px;
}

h1 {
  margin: 0;
  font-size: 14px;
  font-weight: 400;
  line-height: 23px;
  color: #333;
}

.window-buttons {
  display: flex;
  justify-content: flex-end;
  padding-right: 3px;
}

.window-buttons button {
  width: 26px;
  height: 19px;
  display: flex;
  align-items: center;
  justify-content: center;
}

.window-buttons svg {
  width: 12px;
  height: 12px;
}

.window-buttons .close {
  width: 45px;
  background: #c75050;
}

/* Menu and toolbars */
.bars {
  flex-shrink: 0;
  background: linear-gradient(#fff, #fafafa 65%, #eee);
  border-bottom: 1px solid #a8a8ac;
}

.menu {
  display: flex;
  align-items: center;
  gap: 9px;
  height: 23px;
  padding: 0 7px 0 6px;
}

.close-doc {
  margin-left: auto;
}

.close-doc svg {
  width: 9px;
  height: 9px;
}

u {
  text-underline-offset: 2px;
}

.toolbar {
  display: flex;
  align-items: center;
  height: 38px;
  padding-left: 4px;
}

#format-bar {
  height: 39px;
}

.grip {
  width: 7px;
  height: 24px;
  background: repeating-linear-gradient(#999 0 1px, transparent 1px 4px) no-repeat 0 0 / 2px 24px;
}

.tool {
  width: 33px;
  height: 28px;
  display: flex;
  align-items: center;
  justify-content: center;
  flex-shrink: 0;
}

.tool svg {
  width: 24px;
  height: 24px;
}

.drop {
  width: 11px;
  height: 28px;
  display: flex;
  align-items: center;
  justify-content: center;
}

.drop::after {
  content: "";
  border: 3px solid transparent;
  border-top-color: #000;
  border-bottom: 0;
}

.drop.off::after {
  border-top-color: #aaa;
}

.sep {
  width: 8px;
  height: 19px;
  background: linear-gradient(#ccc, #ccc) no-repeat 4px 0 / 1px 19px;
}

.ico-pdf {
  font: bold 6px "DejaVu Sans", sans-serif;
}

.ico-abc {
  font: bold 11px "Open Sans", sans-serif;
  fill: #444;
}

.ico-a {
  font: bold 23px "DejaVu Serif", serif;
  fill: #6b9bd4;
  stroke: #2c5a9c;
  stroke-width: 1px;
}

.ico-day {
  font: 10px "DejaVu Sans", sans-serif;
  fill: #555;
}

.ico-dec {
  font: 9px "Open Sans", sans-serif;
}

.letter {
  font: bold 25px/26px "DejaVu Serif", serif;
  color: #555;
  padding-bottom: 4px;
}

.letter u {
  font-size: 22px;
  text-decoration-thickness: 2px;
}

.percent {
  font-size: 20px;
}

.number {
  font-size: 16px;
  font-weight: 700;
  color: #24364f;
}

.combo {
  position: relative;
  height: 23px;
  border: 1px solid #ababab;
  background: #fff;
}

.combo select {
  width: 100%;
  height: 100%;
  padding: 1px 3px 0;
  border: 0;
  background: none;
  font: inherit;
  appearance: none;
}

/* Arrow box lies over the select and lets clicks through */
.combo::before {
  content: "";
  position: absolute;
  right: 1px;
  top: 1px;
  width: 17px;
  height: 19px;
  border: 1px solid #ababab;
  background: #eee;
  pointer-events: none;
}

.combo::after {
  content: "";
  position: absolute;
  right: 6px;
  top: 6px;
  width: 6px;
  height: 6px;
  border: solid #555;
  border-width: 0 2px 2px 0;
  transform: rotate(45deg);
  pointer-events: none;
}

.font-name {
  width: 123px;
  margin-left: 1px;
}

.font-size {
  width: 46px;
  margin: 0 7px 0 8px;
}

/* Workspace */
.workspace {
  display: flex;
  flex: 1;
  min-height: 0;
}

.document {
  display: flex;
  flex-direction: column;
  flex: 1;
  min-width: 0;
}

.formula-bar {
  display: flex;
  align-items: center;
  height: 36px;
  flex-shrink: 0;
  padding: 0 6px 1px 0;
  border-bottom: 1px solid #999;
}

.name-box {
  display: flex;
  width: 126px;
  height: 24px;
  margin-right: 7px;
  padding: 1px;
  border: 1px solid #ababab;
  border-left: 0;
  background: #fff;
}

.name-box input {
  flex: 1;
  min-width: 0;
  padding: 0 3px;
  border: 0;
  font: inherit;
}

.name-box button {
  width: 17px;
  display: flex;
  align-items: center;
  justify-content: center;
  border: 1px solid #ababab;
  background: #eee;
}

.name-box svg,
.expand svg,
.vscroll svg,
.hscroll svg {
  width: 10px;
  height: 10px;
}

.formula {
  flex: 1;
  height: 24px;
  margin: 0 3px 0 9px;
  border: 1px solid #ababab;
  background: #fff;
  font: inherit;
}

.expand {
  width: 15px;
  height: 22px;
  display: flex;
  align-items: center;
  justify-content: center;
  border: 1px solid #ababab;
  background: #eee;
}

.sheet-row {
  display: flex;
  flex: 1;
  min-height: 0;
}

.sheet {
  position: relative;
  flex: 1;
  min-width: 0;
  overflow: hidden;
  background: #fff;
}

.grid {
  width: 1566px;
  table-layout: fixed;
  border-collapse: separate;
  border-spacing: 0;
}

.grid col {
  width: 73px;
}

.grid .col-num {
  width: 33px;
}

.grid .col-A {
  width: 151px;
}

.grid .col-B {
  width: 141px;
}

.grid th {
  padding: 2px 0 0;
  height: 15px;
  border: solid #666;
  border-width: 0 1px 1px 0;
  background: linear-gradient(90deg, #fbfbfb, #eee);
  font-weight: 400;
  line-height: 12px;
}

.grid thead th {
  height: 18px;
  padding: 0;
  background: linear-gradient(#fafafa, #eee);
  line-height: 17px;
}

.grid th.sel {
  background: linear-gradient(90deg, #80bfff 45%, #3399ff 55%);
  border-color: #3a8ee0;
  color: #fff;
  font-weight: 700;
}

.grid thead th.sel {
  background: linear-gradient(#80bfff 45%, #3399ff 55%);
  border-color: #2a7fd0;
}

.grid td {
  height: 15px;
  padding: 0;
  border: solid #c0c0c0;
  border-width: 0 1px 1px 0;
  font-family: "Liberation Sans", sans-serif;
  font-size: 12px;
  line-height: 14px;
  white-space: nowrap;
}

.grid .head {
  padding-left: 4px;
  border-color: #000;
  background: #990066;
  color: #fff;
}

.grid .head + .head + .head {
  padding-left: 1px;
}

.grid .data {
  padding-right: 1px;
  border-color: #000;
  background: #ff0066;
  text-align: right;
}

.grid .text {
  padding-left: 1px;
  text-align: left;
}

.cursor {
  position: relative;
}

.cursor::before {
  content: "";
  position: absolute;
  inset: -1px -2px -2px -1px;
  border: 2px solid #000;
  border-bottom-width: 3px;
}

.cursor::after {
  content: "";
  position: absolute;
  right: -4px;
  bottom: -5px;
  width: 5px;
  height: 5px;
  background: #000;
}

.chart {
  position: absolute;
  left: 508px;
  top: 141px;
  width: 516px;
  height: 298px;
  background: #fff;
  font-family: "Liberation Sans", sans-serif;
  font-size: 11px;
}

.rule {
  fill: none;
  stroke: #b3b3b3;
}

.axis {
  stroke: #d9d9d9;
  stroke-width: 2;
}

.y-label {
  text-anchor: end;
}

.x-label {
  text-anchor: middle;
}

#curve,
.series {
  fill: none;
  stroke: #004586;
  stroke-width: 2.5;
}

/* Scrollbars */
.vscroll {
  display: flex;
  flex-direction: column;
  width: 17px;
  padding: 0 1px;
}

.vscroll .split {
  height: 5px;
  border: solid #999;
  border-width: 0 0 1px;
  background: linear-gradient(#000, #000) no-repeat 3px 2px / 9px 1px;
}

.vscroll button {
  height: 17px;
  padding-left: 3px;
}

.vscroll .thumb {
  width: 15px;
  height: 267px;
  margin-bottom: auto;
  background: #cdcdcd;
}

.hscroll {
  display: flex;
  align-items: center;
  height: 17px;
  flex-shrink: 0;
  margin-right: 17px;
  border-bottom: 1px solid #666;
}

.hscroll button {
  width: 16px;
  padding-left: 3px;
}

.hscroll .thumb {
  width: 46%;
  height: 15px;
  margin-right: auto;
  background: #cdcdcd;
}

.hscroll .split {
  width: 5px;
  height: 16px;
  border-right: 1px solid #999;
  background: linear-gradient(#000, #000) no-repeat 2px 3px / 1px 10px;
}

/* Sheet tabs */
.tabs {
  display: flex;
  height: 17px;
  flex-shrink: 0;
  padding-left: 1px;
  gap: 2px;
}

.step {
  width: 15px;
  height: 15px;
  border: 1px solid #aaa;
}

.step svg {
  width: 12px;
  height: 12px;
}

.tab-list {
  display: flex;
  margin-left: -2px;
}

.tab {
  width: 56px;
  height: 16px;
  border: solid #666;
  border-width: 0 1px 1px 0;
  line-height: 14px;
}

.tab:first-child {
  width: 57px;
  border-left-width: 1px;
}

.tab.active {
  background: #fff;
  border-color: #fff #666 #fff #fff;
  font-weight: 700;
}

.tab.add {
  width: 33px;
  padding-left: 10px;
}

.add svg {
  width: 12px;
  height: 12px;
}

/* Sidebar */
.splitter {
  display: flex;
  align-items: center;
  width: 6px;
  margin-bottom: 2px;
  padding-left: 1px;
  border: 1px solid #999;
}

.splitter svg {
  width: 4px;
  height: 36px;
}

.sidebar {
  display: flex;
  flex-direction: column;
  align-items: center;
  gap: 3px;
  width: 39px;
  padding: 3px 1px 0 0;
  margin-bottom: 2px;
  border: solid #999;
  border-width: 1px 0;
}

.sidebar button {
  display: flex;
  align-items: center;
  justify-content: center;
  width: 32px;
  height: 32px;
}

.sidebar svg {
  width: 22px;
  height: 22px;
}

.sidebar hr {
  width: 23px;
  margin: 0;
  border: 0;
  border-top: 1px solid #ddd;
}

.sidebar .current {
  border: 1px solid #b5b5b5;
  border-radius: 3px;
}

/* Status bar */
.status {
  display: flex;
  align-items: center;
  height: 21px;
  flex-shrink: 0;
  border-top: 1px solid #999;
}

.status > span {
  display: flex;
  align-items: center;
  height: 16px;
  border-right: 1px solid #999;
}

.status .st-sheet {
  width: 286px;
  padding-left: 10px;
}

.status .st-info {
  width: 362px;
}

.status .st-style {
  flex: 1;
  padding-left: 8px;
}

.status .st-icon {
  width: 29px;
  justify-content: center;
}

.status .wide {
  width: 68px;
}

.st-icon svg {
  width: 12px;
  height: 12px;
}

.status .st-sum {
  width: 288px;
  justify-content: center;
}

.status .st-zoom {
  width: 143px;
  padding: 0 7px 0 10px;
  justify-content: space-between;
}

.st-zoom svg {
  width: 8px;
  height: 8px;
}

.st-zoom input {
  width: 97px;
  height: 10px;
  margin: 0;
  appearance: none;
  background:
    linear-gradient(#999, #999) no-repeat 48px 0 / 1px 10px,
    linear-gradient(#999, #999) no-repeat 0 4px / 100% 2px;
}

.st-zoom input::-webkit-slider-thumb {
  appearance: none;
  width: 9px;
  height: 9px;
  border: 1px solid #888;
  border-radius: 50%;
  background: #fff;
}

.status .st-percent {
  width: 48px;
  padding-left: 10px;
  border-right: 0;
}

/* Taskbar */
.taskbar {
  position: relative;
  display: flex;
  height: 40px;
  flex-shrink: 0;
  background: linear-gradient(#666, #5f5f5f);
  border-top: 1px solid #555;
}

.feathers {
  position: absolute;
  right: 0;
  top: 0;
  width: 640px;
  height: 39px;
  opacity: 0.5;
}

.start {
  width: 50px;
  padding-left: 12px;
}

.start svg {
  width: 26px;
  height: 26px;
}

.app {
  display: flex;
  align-items: center;
  justify-content: center;
  width: 58px;
  margin: 0 2px;
}

.app svg {
  width: 32px;
  height: 32px;
}

.app.open {
  border: 1px solid #a5a5a5;
  background: #868686;
}

.app.front {
  border-color: #eee;
  background: #a8a8a8;
}

.tray {
  position: relative;
  display: flex;
  align-items: center;
  gap: 6px;
  margin-left: auto;
  padding-right: 16px;
}

.tray svg {
  width: 18px;
  height: 18px;
}

.tray .help {
  width: 32px;
  height: 32px;
  margin-right: 4px;
}

.clock {
  display: flex;
  flex-direction: column;
  align-items: center;
  margin-left: 8px;
  color: #fff;
  font-size: 12px;
  line-height: 17px;
}
```
